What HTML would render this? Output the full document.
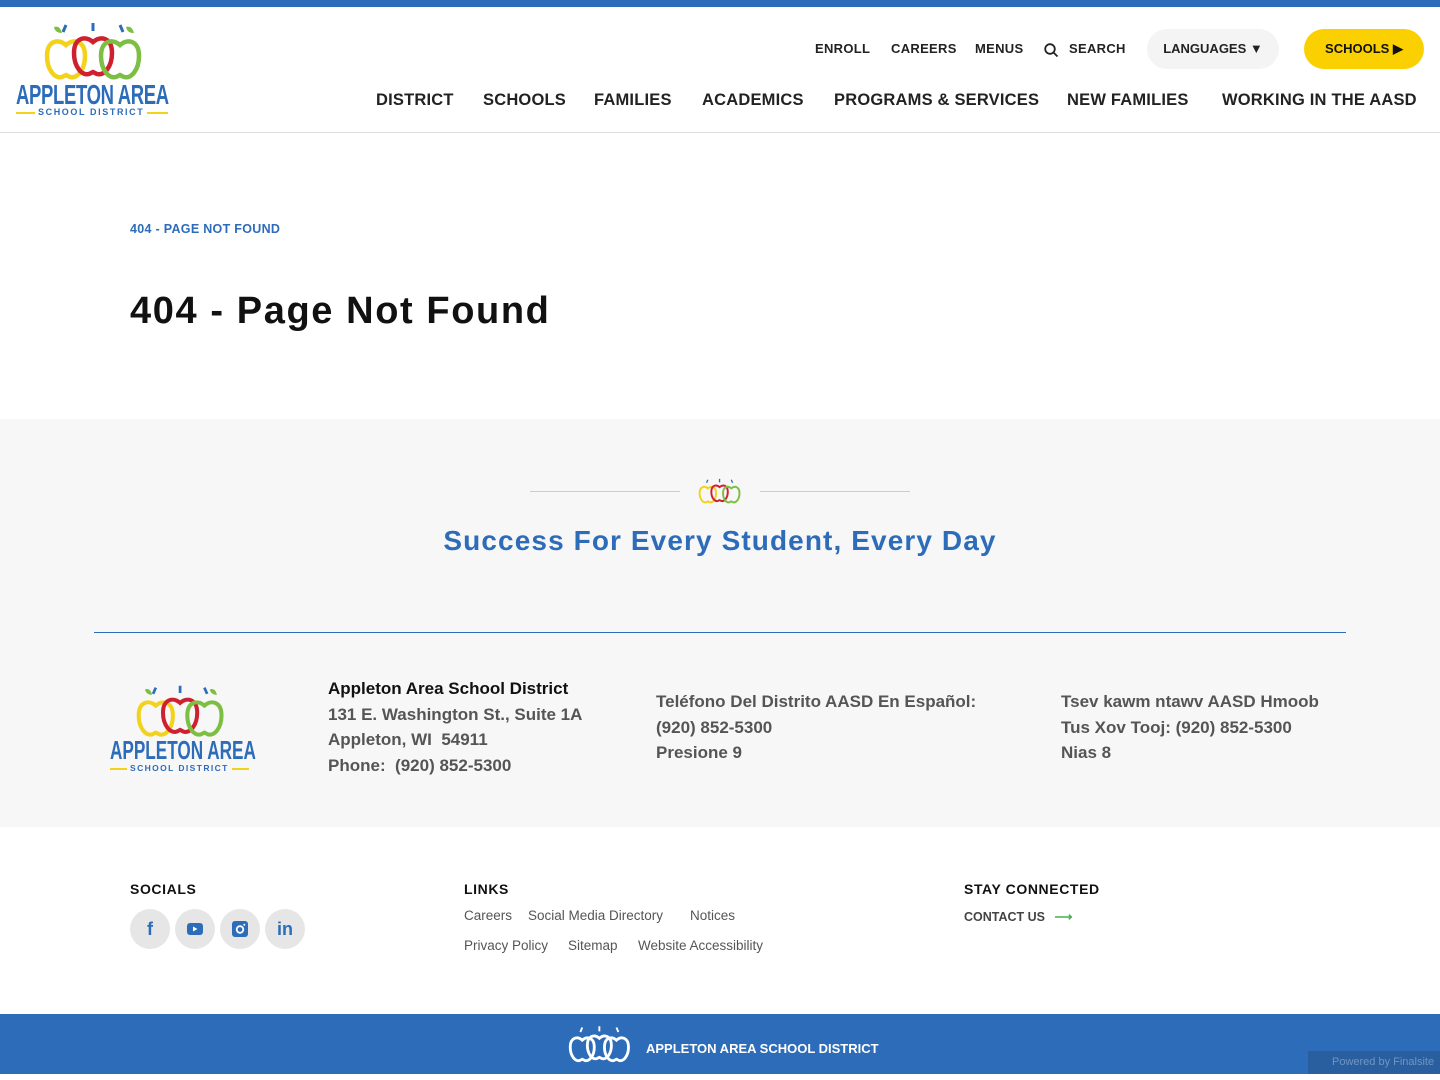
<!DOCTYPE html>
<html><head><meta charset="utf-8"><style>
*{margin:0;padding:0;box-sizing:border-box}
body{width:1440px;height:1080px;overflow:hidden;font-family:"Liberation Sans",sans-serif;background:#fff;color:#111;position:relative}
.top{height:7px;background:#2d6cb9}
header{position:absolute;top:7px;left:0;width:1440px;height:126px;border-bottom:1px solid #ddd}
.util{position:absolute;top:34px;font-size:13px;font-weight:700;letter-spacing:.3px;color:#222}
.main{position:absolute;top:84px;font-size:16.5px;font-weight:700;color:#222;letter-spacing:.2px;white-space:nowrap}
.pill{position:absolute;top:22px;height:40px;border-radius:20px;font-size:13px;font-weight:700;line-height:40px;text-align:center}
.a{position:absolute;white-space:nowrap}
.gray{position:absolute;top:419px;left:0;width:1440px;height:408px;background:#f7f7f7}
.ft{font-size:17px;font-weight:700;color:#555;line-height:25.5px}
.soc{position:absolute;top:909px;width:40px;height:40px;border-radius:50%;background:#e6e6e6;display:flex;align-items:center;justify-content:center}
.lk{position:absolute;font-size:13.5px;color:#555}
</style></head><body>
<svg width="0" height="0" style="position:absolute"><defs>
<path id="ap" d="M20 9 C12 2 1 5 1 20 C1 34 9 43 16 41 L20 39 L24 41 C31 43 39 34 39 20 C39 5 28 2 20 9Z" fill="none" stroke-width="4.5"/>
</defs></svg>
<div class="top"></div>
<header>
<svg class="a" style="left:44px;top:14px" width="100" height="60" viewBox="0 0 100 60">
<use href="#ap" x="2" y="15" stroke="#f2d21b"/>
<use href="#ap" x="29" y="12" stroke="#cf2030"/>
<use href="#ap" x="56" y="15" stroke="#7cbf43"/>
<path d="M10 6 q6 -2 8 6 q-7 0 -8 -6z M82 6 q6 -2 8 6 q-7 0 -8 -6z" fill="#7cbf43"/>
<path d="M22 4 l-3 7 M49 2 v8 M76 4 l3 7" stroke="#2d6cb9" stroke-width="3"/>
</svg>
<div class="a" style="left:16px;top:72px;font-size:28px;font-weight:700;color:#2d6cb9;transform:scaleX(.66);transform-origin:left;letter-spacing:-.5px">APPLETON AREA</div>
<div class="a" style="left:16px;top:105px;width:152px;height:2px;background:#f2d21b"></div>
<div class="a" style="left:35px;top:100px;background:#fff;padding:0 3px;font-size:9px;font-weight:700;color:#2d6cb9;letter-spacing:1.6px">SCHOOL DISTRICT</div>
<div class="util" style="left:815px">ENROLL</div>
<div class="util" style="left:891px">CAREERS</div>
<div class="util" style="left:975px">MENUS</div>
<svg class="a" style="left:1044px;top:36px" width="15" height="15" viewBox="0 0 15 15"><circle cx="6" cy="6" r="4.8" fill="none" stroke="#222" stroke-width="1.8"/><path d="M9.5 9.5l4 4" stroke="#222" stroke-width="1.8"/></svg>
<div class="util" style="left:1069px">SEARCH</div>
<div class="pill" style="left:1147px;width:132px;background:#f4f4f4;color:#222">LANGUAGES &#9660;</div>
<div class="pill" style="left:1304px;width:120px;background:#fbd000;color:#111">SCHOOLS &#9654;</div>
<div class="main" style="left:376px">DISTRICT</div>
<div class="main" style="left:483px">SCHOOLS</div>
<div class="main" style="left:594px">FAMILIES</div>
<div class="main" style="left:702px">ACADEMICS</div>
<div class="main" style="left:834px">PROGRAMS &amp; SERVICES</div>
<div class="main" style="left:1067px">NEW FAMILIES</div>
<div class="main" style="left:1222px">WORKING IN THE AASD</div>
</header>
<div class="a" style="left:130px;top:222px;font-size:12.5px;font-weight:700;color:#2d6cb9;letter-spacing:.3px">404 - PAGE NOT FOUND</div>
<div class="a" style="left:130px;top:290px;font-size:38px;font-weight:700;color:#111;letter-spacing:1.6px">404 - Page Not Found</div>
<div class="gray">
<div class="a" style="left:530px;top:72px;width:150px;height:1px;background:#ccc"></div>
<div class="a" style="left:760px;top:72px;width:150px;height:1px;background:#ccc"></div>
<svg class="a" style="left:698px;top:59px" width="44" height="26" viewBox="0 0 100 60">
<use href="#ap" x="2" y="15" stroke="#f2d21b"/><use href="#ap" x="29" y="12" stroke="#cf2030"/><use href="#ap" x="56" y="15" stroke="#7cbf43"/>
<path d="M22 4 l-3 7 M49 2 v8 M76 4 l3 7" stroke="#2d6cb9" stroke-width="3"/></svg>
<div class="a" style="left:0;width:1440px;top:106px;text-align:center;font-size:28px;font-weight:700;color:#2d6cb9;letter-spacing:1.1px">Success For Every Student, Every Day</div>
<div class="a" style="left:94px;top:213px;width:1252px;height:1px;background:#2d6cb9"></div>
<svg class="a" style="left:136px;top:265px" width="90" height="54" viewBox="0 0 100 60">
<use href="#ap" x="2" y="15" stroke="#f2d21b"/><use href="#ap" x="29" y="12" stroke="#cf2030"/><use href="#ap" x="56" y="15" stroke="#7cbf43"/>
<path d="M10 6 q6 -2 8 6 q-7 0 -8 -6z M82 6 q6 -2 8 6 q-7 0 -8 -6z" fill="#7cbf43"/>
<path d="M22 4 l-3 7 M49 2 v8 M76 4 l3 7" stroke="#2d6cb9" stroke-width="3"/></svg>
<div class="a" style="left:110px;top:316px;font-size:26px;font-weight:700;color:#2d6cb9;transform:scaleX(.66);transform-origin:left">APPLETON AREA</div>
<div class="a" style="left:110px;top:349px;width:139px;height:2px;background:#f2d21b"></div>
<div class="a" style="left:127px;top:344px;background:#f7f7f7;padding:0 3px;font-size:8.5px;font-weight:700;color:#2d6cb9;letter-spacing:1.4px">SCHOOL DISTRICT</div>
<div class="a ft" style="left:328px;top:257px"><span style="color:#111">Appleton Area School District</span><br>131 E. Washington St., Suite 1A<br>Appleton, WI&nbsp; 54911<br>Phone:&nbsp; (920) 852-5300</div>
<div class="a ft" style="left:656px;top:270px">Teléfono Del Distrito AASD En Español:<br>(920) 852-5300<br>Presione 9</div>
<div class="a ft" style="left:1061px;top:270px">Tsev kawm ntawv AASD Hmoob<br>Tus Xov Tooj: (920) 852-5300<br>Nias 8</div>
</div>
<div class="a" style="left:130px;top:881px;font-size:14px;font-weight:700;letter-spacing:.6px">SOCIALS</div>
<div class="a" style="left:464px;top:881px;font-size:14px;font-weight:700;letter-spacing:.6px">LINKS</div>
<div class="a" style="left:964px;top:881px;font-size:14px;font-weight:700;letter-spacing:.6px">STAY CONNECTED</div>
<div class="soc" style="left:130px;color:#2d6cb9;font-weight:700;font-size:18px">f</div>
<div class="soc" style="left:175px"><svg width="16" height="12"><rect width="16" height="12" rx="3" fill="#2d6cb9"/><path d="M6 3.5v5l4.5-2.5z" fill="#fff"/></svg></div>
<div class="soc" style="left:220px"><svg width="16" height="16"><rect width="16" height="16" rx="3" fill="#2d6cb9"/><circle cx="8" cy="8.5" r="3.3" fill="none" stroke="#fff" stroke-width="1.8"/><circle cx="12.3" cy="3.7" r="1" fill="#fff"/></svg></div>
<div class="soc" style="left:265px;color:#2d6cb9;font-weight:700;font-size:18px">in</div>
<div class="lk" style="left:464px;top:908px">Careers</div>
<div class="lk" style="left:528px;top:908px">Social Media Directory</div>
<div class="lk" style="left:690px;top:908px">Notices</div>
<div class="lk" style="left:464px;top:938px">Privacy Policy</div>
<div class="lk" style="left:568px;top:938px">Sitemap</div>
<div class="lk" style="left:638px;top:938px">Website Accessibility</div>
<div class="a" style="left:964px;top:909px;font-size:12.5px;font-weight:700;color:#444">CONTACT US <span style="color:#4caf50;margin-left:6px">⟶</span></div>
<div class="a" style="left:0;top:1014px;width:1440px;height:60px;background:#2d6cb9">
<svg class="a" style="left:568px;top:11px" width="64" height="38" viewBox="0 0 100 60">
<use href="#ap" x="2" y="15" stroke="#fff"/><use href="#ap" x="29" y="12" stroke="#fff"/><use href="#ap" x="56" y="15" stroke="#fff"/>
<path d="M22 4 l-3 7 M49 2 v8 M76 4 l3 7" stroke="#fff" stroke-width="3"/></svg>
<div class="a" style="left:646px;top:27px;color:#fff;font-size:13px;font-weight:700">APPLETON AREA SCHOOL DISTRICT</div>
<div class="a" style="left:1308px;top:37px;width:132px;height:23px;background:#2a5f9f;color:#6f95c4;font-size:11px;line-height:23px;padding-left:24px">Powered by Finalsite</div>
</div>
</body></html>
